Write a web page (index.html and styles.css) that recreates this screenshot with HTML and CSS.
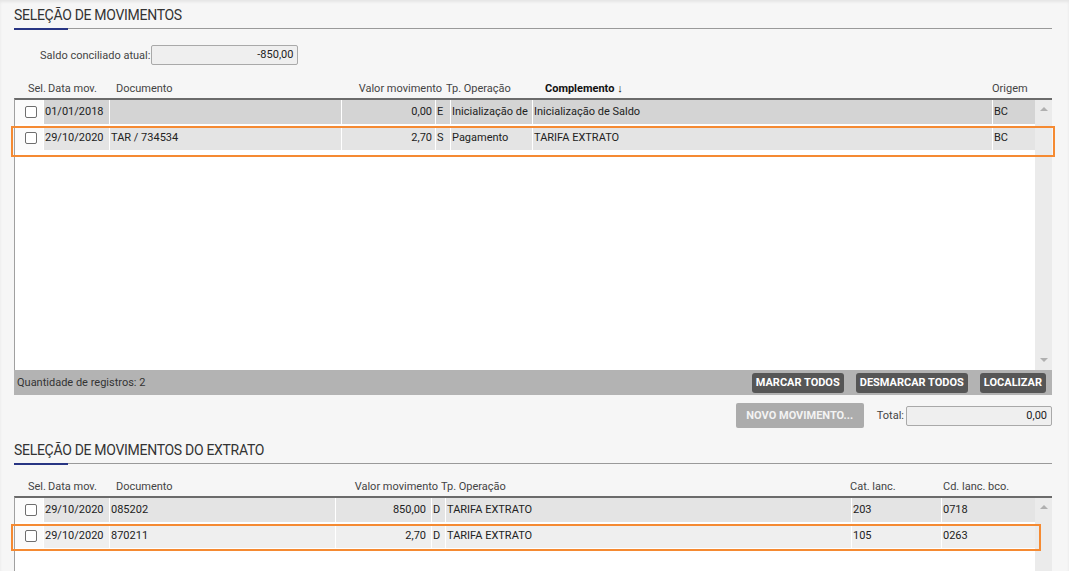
FILE: index.html
```html
<!DOCTYPE html>
<html lang="pt-BR">
<head>
    <meta charset="UTF-8">
    <title>Conciliação bancária</title>
    <link rel="stylesheet" href="styles.css">
</head>
<body>
    <div class="page">
        <!-- movimentos do sistema -->
        <div class="section-title"><span>Seleção de movimentos</span></div>

        <div class="saldo-row">
            <label>Saldo conciliado atual:</label>
            <div class="field saldo-field">-850,00</div>
        </div>

        <div class="grid-head head-mov">
            <span class="h-sel">Sel.</span>
            <span class="h-data">Data mov.</span>
            <span class="h-doc">Documento</span>
            <span class="h-valor">Valor movimento</span>
            <span class="h-tp">Tp. Operação</span>
            <span class="h-comp">Complemento ↓</span>
            <span class="h-orig">Origem</span>
        </div>

        <div class="grid grid-mov">
            <div class="grid-body">
                <div class="rows">
                    <div class="row row-dark">
                        <div class="cell cell-sel"><span class="check"></span></div>
                        <div class="cell">01/01/2018</div>
                        <div class="cell"></div>
                        <div class="cell num">0,00</div>
                        <div class="cell">E</div>
                        <div class="cell">Inicialização de</div>
                        <div class="cell">Inicialização de Saldo</div>
                        <div class="cell">BC</div>
                    </div>
                    <div class="row row-light">
                        <div class="cell cell-sel"><span class="check"></span></div>
                        <div class="cell">29/10/2020</div>
                        <div class="cell">TAR / 734534</div>
                        <div class="cell num">2,70</div>
                        <div class="cell">S</div>
                        <div class="cell">Pagamento</div>
                        <div class="cell">TARIFA EXTRATO</div>
                        <div class="cell">BC</div>
                        <div class="mark mark-mov"></div>
                    </div>
                </div>
                <div class="scrollbar">
                    <span class="arrow-up"></span>
                    <span class="arrow-down"></span>
                </div>
            </div>
            <div class="grid-foot">
                <span>Quantidade de registros: 2</span>
                <div class="foot-buttons">
                    <button class="btn-dark">MARCAR TODOS</button>
                    <button class="btn-dark">DESMARCAR TODOS</button>
                    <button class="btn-dark">LOCALIZAR</button>
                </div>
            </div>
        </div>

        <div class="total-row">
            <button class="btn-disabled">NOVO MOVIMENTO...</button>
            <label>Total:</label>
            <div class="field total-field">0,00</div>
        </div>

        <!-- movimentos do extrato -->
        <div class="section-title title-extrato"><span>Seleção de movimentos do extrato</span></div>

        <div class="grid-head head-ext">
            <span class="h-sel">Sel.</span>
            <span class="h-data">Data mov.</span>
            <span class="h-doc">Documento</span>
            <span class="h-valor">Valor movimento</span>
            <span class="h-tp">Tp. Operação</span>
            <span class="h-cat">Cat. lanc.</span>
            <span class="h-cd">Cd. lanc. bco.</span>
        </div>

        <div class="grid grid-ext">
            <div class="grid-body">
                <div class="rows">
                    <div class="row row-light">
                        <div class="cell cell-sel"><span class="check"></span></div>
                        <div class="cell">29/10/2020</div>
                        <div class="cell">085202</div>
                        <div class="cell num">850,00</div>
                        <div class="cell">D</div>
                        <div class="cell">TARIFA EXTRATO</div>
                        <div class="cell">203</div>
                        <div class="cell">0718</div>
                    </div>
                    <div class="row row-lighter">
                        <div class="cell cell-sel"><span class="check"></span></div>
                        <div class="cell">29/10/2020</div>
                        <div class="cell">870211</div>
                        <div class="cell num">2,70</div>
                        <div class="cell">D</div>
                        <div class="cell">TARIFA EXTRATO</div>
                        <div class="cell">105</div>
                        <div class="cell">0263</div>
                        <div class="mark mark-ext"></div>
                    </div>
                </div>
                <div class="scrollbar">
                    <span class="arrow-up"></span>
                </div>
            </div>
        </div>
    </div>
</body>
</html>
```

FILE: styles.css
```css
body {
    margin: 0;
    background: #f6f6f6;
    font-family: Roboto, "Liberation Sans", Arial, sans-serif;
    font-size: 11px;
    color: #222;
    overflow: hidden;
    box-shadow: inset 0 2px 3px rgba(0, 0, 0, 0.07);
    height: 571px;
}

.page {
    padding: 0 17px 0 14px;
}

/* titulo com sublinhado azul */
.section-title {
    position: relative;
    height: 28px;
    border-bottom: 1px solid #9a9a9a;
    font-size: 14px;
    letter-spacing: -0.3px;
    color: #333;
    text-transform: uppercase;
    line-height: 28px;
}

.section-title span {
    position: relative;
    top: 1px;
}

.section-title::after {
    content: "";
    position: absolute;
    left: 0;
    bottom: -2px;
    width: 54px;
    height: 2px;
    background: #283583;
}

.title-extrato {
    margin-top: 7px;
}

.saldo-row {
    display: flex;
    align-items: center;
    margin-top: 16px;
    padding-left: 26px;
    color: #444;
}

.field {
    box-sizing: border-box;
    height: 20px;
    line-height: 18px;
    border: 1px solid #a9a9a9;
    border-radius: 2px;
    background: #efefef;
    text-align: right;
    padding-right: 4px;
    color: #222;
    font-size: 11px;
}

.saldo-field {
    width: 147px;
    margin-left: 1px;
}

/* cabecalho das colunas */
.grid-head {
    display: flex;
    height: 16px;
    line-height: 16px;
    color: #444;
    white-space: nowrap;
}

.head-mov {
    margin-top: 16px;
}

.head-ext {
    margin-top: 15px;
}

.h-sel { margin-left: 14px; width: 20px; }
.h-data { width: 68px; }
.head-mov .h-doc { width: 230px; }
.head-mov .h-valor { width: 96px; text-align: right; }
.head-mov .h-tp { margin-left: 4px; width: 99px; }
.h-comp { width: 447px; font-weight: bold; color: #111; }
.head-ext .h-doc { width: 226px; }
.head-ext .h-valor { width: 96px; text-align: right; }
.head-ext .h-tp { margin-left: 3px; width: 409px; }
.h-cat { width: 93px; }

/* grade */
.grid {
    margin-top: 1px;
    border-top: 2px solid #6b6b6b;
    border-left: 1px solid #a0a0a0;
}

.grid-body {
    display: flex;
    background: #fff;
}

.grid-mov .grid-body {
    height: 270px;
}

.grid-ext .grid-body {
    height: 80px;
}

.rows {
    flex: 1;
}

.row {
    position: relative;
    display: grid;
    column-gap: 1px;
    height: 24px;
    margin-bottom: 2px;
}

.grid-mov .row {
    grid-template-columns: 28px 65px 231px 93px 14px 81px 459px 1fr;
}

.grid-ext .row {
    grid-template-columns: 28px 65px 225px 95px 13px 405px 89px 1fr;
}

.cell {
    padding: 0 2px 0 1px;
    line-height: 24px;
    white-space: nowrap;
    overflow: hidden;
}

.cell.num {
    text-align: right;
    padding-right: 3px;
}

.grid-ext .cell.num {
    padding-right: 5px;
}

.row-dark .cell { background: #d4d4d4; }
.row-light .cell { background: #e4e4e4; }
.row-lighter .cell { background: #efefef; }
.row .cell-sel { background: #fbfbfb; padding: 0; }

.check {
    display: block;
    box-sizing: border-box;
    width: 12px;
    height: 12px;
    margin: 6px 0 0 10px;
    border: 1px solid #6e6e6e;
    border-radius: 2px;
    background: #fff;
}

/* destaque laranja */
.mark {
    position: absolute;
    z-index: 2;
    box-sizing: border-box;
    border: 2px solid #f58a32;
    pointer-events: none;
}

.mark-mov {
    left: -4px;
    top: 0;
    width: 1044px;
    height: 31px;
}

.mark-ext {
    left: -4px;
    top: 0;
    width: 1030px;
    height: 27px;
}

.scrollbar {
    position: relative;
    width: 17px;
    background: #ebebeb;
}

.arrow-up,
.arrow-down {
    position: absolute;
    left: 5px;
    width: 0;
    height: 0;
    border-left: 4px solid transparent;
    border-right: 4px solid transparent;
}

.arrow-up {
    top: 7px;
    border-bottom: 4px solid #b0b0b0;
}

.arrow-down {
    bottom: 8px;
    border-top: 4px solid #b0b0b0;
}

.grid-foot {
    display: flex;
    justify-content: space-between;
    align-items: center;
    height: 25px;
    margin-left: -1px;
    padding: 0 6px 0 3px;
    background: #b3b3b3;
    color: #333;
}

.foot-buttons {
    display: flex;
    gap: 12px;
}

button {
    font-family: inherit;
    font-size: 11px;
    font-weight: bold;
    border: none;
    cursor: pointer;
}

.btn-dark {
    height: 20px;
    padding: 0 4px;
    border-radius: 3px;
    background: #565656;
    color: #fff;
}

.total-row {
    display: flex;
    align-items: center;
    justify-content: flex-end;
    margin-top: 8px;
    color: #444;
}

.btn-disabled {
    height: 25px;
    width: 128px;
    border-radius: 2px;
    background: #acacac;
    color: #f3f3f3;
    margin-right: 13px;
}

.total-field {
    width: 146px;
    margin-left: 2px;
}
```
